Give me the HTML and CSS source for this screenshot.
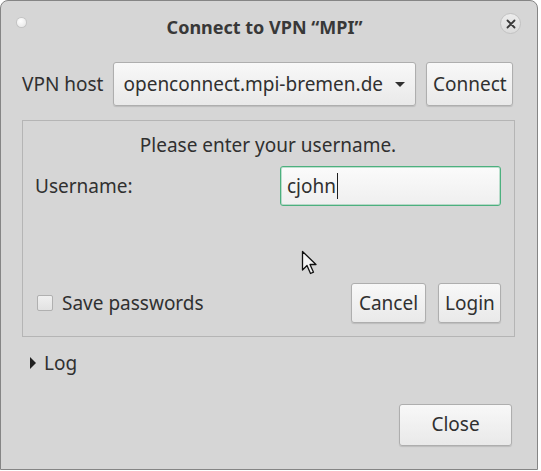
FILE: index.html
```html
<!DOCTYPE html>
<html lang="en">
  <head>
    <meta charset="UTF-8" />
    <title>Connect to VPN “MPI”</title>
    <link rel="stylesheet" href="styles.css">
  </head>
  <body>
    <div class="window">
      <div class="titlebar">
        <span class="dot"></span>
        <span class="title">Connect to VPN “MPI”</span>
        <span class="close-x">
          <svg width="10" height="10" viewBox="0 0 10 10">
            <path d="M1.5 1.5 L8.5 8.5 M8.5 1.5 L1.5 8.5" stroke="#3a3a3a" stroke-width="1.8" stroke-linecap="round" />
          </svg>
        </span>
      </div>
      <div class="content">
        <div class="host-row">
          <span class="host-label">VPN host</span>
          <div class="combo">
            <span>openconnect.mpi-bremen.de</span>
            <span class="arrow"></span>
          </div>
          <button class="btn btn-connect">Connect</button>
        </div>
        <div class="frame">
          <p class="prompt">Please enter your username.</p>
          <div class="field-row">
            <span>Username:</span>
            <div class="entry">cjohn<span class="caret"></span></div>
          </div>
          <div class="frame-foot">
            <label class="check"><span class="box"></span>Save passwords</label>
            <div class="actions">
              <button class="btn btn-cancel">Cancel</button>
              <button class="btn btn-login">Login</button>
            </div>
          </div>
        </div>
        <div class="log"><span class="tri"></span>Log</div>
        <div class="footer">
          <button class="btn btn-close">Close</button>
        </div>
      </div>
      <svg class="pointer" width="18" height="26" viewBox="0 0 18 26">
        <path d="M1.5 1.5 L1.5 20 L6 15.5 L9.5 23.5 L12.5 22.2 L9 14.5 L15 14.5 Z" fill="#f4f4f4" stroke="#111" stroke-width="1.3" stroke-linejoin="round" />
      </svg>
    </div>
  </body>
</html>
```

FILE: styles.css
```css
* {
  box-sizing: border-box;
  margin: 0;
  padding: 0;
}
body {
  font-family: "Noto Sans", "DejaVu Sans", sans-serif;
  font-size: 19px;
  color: #303030;
  background: #ffffff;
}
.window {
  position: relative;
  width: 538px;
  height: 470px;
  background: #d6d6d6;
  border: 1px solid #858585;
  border-radius: 8px 8px 0 0;
}
.titlebar {
  display: grid;
  grid-template-columns: 1fr auto 1fr;
  align-items: start;
  height: 46px;
}
.dot {
  width: 9px;
  height: 9px;
  margin: 17px 0 0 16px;
  border-radius: 50%;
  background: radial-gradient(circle at 40% 35%, #ffffff, #e4e4e4);
  box-shadow: 0 0 0 1px #c4c4c4;
}
.title {
  font-weight: 700;
  font-size: 18px;
  line-height: 24px;
  margin-top: 14px;
  padding-right: 9px;
  color: #383838;
}
.close-x {
  justify-self: end;
  display: flex;
  align-items: center;
  justify-content: center;
  width: 21px;
  height: 21px;
  margin: 12px 16px 0 0;
  border-radius: 50%;
  background: linear-gradient(#ececec, #dcdcdc);
  border: 1px solid #c2c2c2;
}
.content {
  padding: 0 22px 0 21px;
}
.host-row {
  display: flex;
  align-items: center;
  gap: 10px;
  margin-top: 15px;
  height: 44px;
}
.btn {
  font-family: inherit;
  font-size: 19px;
  color: #303030;
  background: linear-gradient(#f8f8f8, #e9e9e9);
  border: 1px solid #aeaeae;
  border-radius: 3px;
  box-shadow: 0 1px 1px rgba(0, 0, 0, 0.12);
  padding: 0 6px;
  height: 40px;
  line-height: 26px;
}
.combo {
  flex: 1;
  display: flex;
  align-items: center;
  justify-content: space-between;
  height: 44px;
  padding: 0 10px 0 9px;
  background: linear-gradient(#f8f8f8, #e9e9e9);
  border: 1px solid #aeaeae;
  border-radius: 3px;
  box-shadow: 0 1px 1px rgba(0, 0, 0, 0.12);
}
.arrow {
  width: 0;
  height: 0;
  border-left: 5px solid transparent;
  border-right: 5px solid transparent;
  border-top: 5px solid #303030;
}
.btn-connect {
  height: 44px;
  width: 87px;
  margin-right: 2px;
}
.frame {
  display: flex;
  flex-direction: column;
  height: 217px;
  margin-top: 14px;
  border: 1px solid #b5b5b5;
  padding: 11px 13px 13px 12px;
}
.prompt {
  text-align: center;
  line-height: 26px;
}
.field-row {
  display: grid;
  grid-template-columns: 1fr 221px;
  align-items: center;
  margin-top: 8px;
  line-height: 26px;
}
.entry {
  display: flex;
  align-items: center;
  height: 40px;
  padding-left: 6px;
  background: linear-gradient(#fbfbfb, #efefef);
  border: 1px solid #4cb07e;
  border-radius: 3px;
  box-shadow: inset 0 0 0 1px rgba(76, 176, 126, 0.35);
}
.caret {
  width: 1px;
  height: 26px;
  margin-left: 1px;
  background: #202020;
}
.frame-foot {
  display: flex;
  align-items: center;
  justify-content: space-between;
  margin-top: auto;
}
.check {
  display: flex;
  align-items: center;
  gap: 9px;
  margin: 0 0 0 2px;
  line-height: 26px;
}
.box {
  width: 16px;
  height: 16px;
  border: 1px solid #b0b0b0;
  border-radius: 2px;
  background: linear-gradient(#f0f0f0, #e2e2e2);
}
.actions {
  display: flex;
  gap: 12px;
}
.btn-cancel {
  width: 75px;
}
.btn-login {
  width: 63px;
}
.log {
  display: flex;
  align-items: center;
  gap: 8px;
  margin-top: 13px;
  padding-left: 8px;
  line-height: 26px;
}
.tri {
  width: 0;
  height: 0;
  border-top: 6px solid transparent;
  border-bottom: 6px solid transparent;
  border-left: 6px solid #202020;
}
.footer {
  display: flex;
  justify-content: flex-end;
  margin-top: 28px;
}
.btn-close {
  width: 113px;
  height: 42px;
  margin-right: 3px;
  padding-bottom: 3px;
}
.pointer {
  position: absolute;
  left: 300px;
  top: 249px;
}
```
